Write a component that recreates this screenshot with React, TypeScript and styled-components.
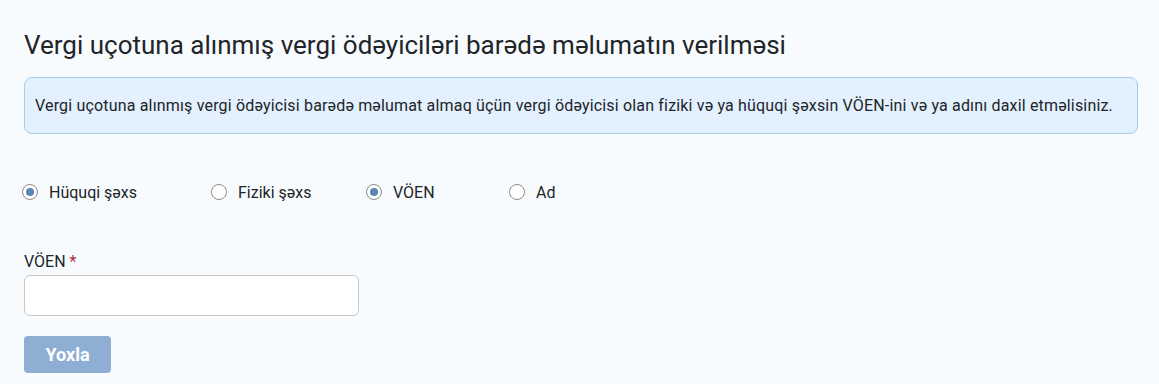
import React from 'react';
import styled, {createGlobalStyle} from "styled-components";

const GlobalStyle = createGlobalStyle`
    * {
        box-sizing: border-box;
    }
    body {
        margin: 0;
        background-color: #f8fbfd;
        font-family: Roboto, "Liberation Sans", sans-serif;
        color: #212529;
    }
`

type RadioOption = {
    label: string
    checked: boolean
    width: number
}

const options: Array<RadioOption> = [
    {label: 'Hüquqi şəxs', checked: true, width: 189},
    {label: 'Fiziki şəxs', checked: false, width: 155},
    {label: 'VÖEN', checked: true, width: 143},
    {label: 'Ad', checked: false, width: 100},
]

const App = () => {
    return (
        <>
            <GlobalStyle/>
            <Page>
                <Title>Vergi uçotuna alınmış vergi ödəyiciləri barədə məlumatın verilməsi</Title>
                <Alert>
                    Vergi uçotuna alınmış vergi ödəyicisi barədə məlumat almaq üçün vergi ödəyicisi olan fiziki və ya
                    hüquqi şəxsin VÖEN-ini və ya adını daxil etməlisiniz.
                </Alert>
                <RadioRow>
                    {options.map((item, index) => {
                        return <RadioItem key={index} $width={item.width}>
                            <RadioCircle $checked={item.checked}/>
                            <RadioLabel>{item.label}</RadioLabel>
                        </RadioItem>
                    })}
                </RadioRow>
                <Field>
                    <FieldLabel>VÖEN <Required>*</Required></FieldLabel>
                    <Input type="text"/>
                </Field>
                <Button>Yoxla</Button>
            </Page>
        </>
    );
};

export default App;

const Page = styled.div`
    display: flex;
    flex-direction: column;
    align-items: flex-start;
    padding: 27px 21px 0 24px;
`

const Title = styled.h1`
    margin: 0;
    font-size: 26px;
    font-weight: 400;
    line-height: 36px;
    color: #212529;
`

const Alert = styled.div`
    align-self: stretch;
    margin-top: 14px;
    height: 57px;
    display: flex;
    align-items: center;
    padding: 0 10px;
    font-size: 16px;
    letter-spacing: 0.17px;
    background-color: #e3f0fd;
    border: 1px solid #a9cbe8;
    border-radius: 8px;
    color: #212529;
`

const RadioRow = styled.div`
    display: flex;
    margin-top: 46px;
    margin-left: -2px;
    height: 24px;
    align-items: center;
`

const RadioItem = styled.label<{ $width: number }>`
    display: flex;
    align-items: center;
    gap: 11px;
    width: ${props => props.$width}px;
`

const RadioCircle = styled.span<{ $checked: boolean }>`
    width: 16px;
    height: 16px;
    flex-shrink: 0;
    border-radius: 50%;
    border: 1px solid #8a8a8a;
    background-color: #fff;
    display: flex;
    align-items: center;
    justify-content: center;

    &::after {
        content: '';
        width: 8px;
        height: 8px;
        border-radius: 50%;
        background-color: #5b86b8;
        display: ${props => props.$checked ? 'block' : 'none'};
    }
`

const RadioLabel = styled.span`
    font-size: 16px;
    color: #212529;
`

const Field = styled.div`
    display: flex;
    flex-direction: column;
    margin-top: 47px;
`

const FieldLabel = styled.span`
    font-size: 16px;
    line-height: 22px;
    margin-bottom: 2px;
`

const Required = styled.span`
    color: #b02a37;
`

const Input = styled.input`
    width: 335px;
    height: 41px;
    border: 1px solid #c8c8c8;
    border-radius: 6px;
    background-color: #fff;
    outline: none;
`

const Button = styled.button`
    margin-top: 20px;
    width: 87px;
    height: 37px;
    border: none;
    border-radius: 4px;
    background-color: #8eaed3;
    color: #fff;
    font-family: Roboto, "Liberation Sans", sans-serif;
    font-size: 18px;
    font-weight: 700;
`
